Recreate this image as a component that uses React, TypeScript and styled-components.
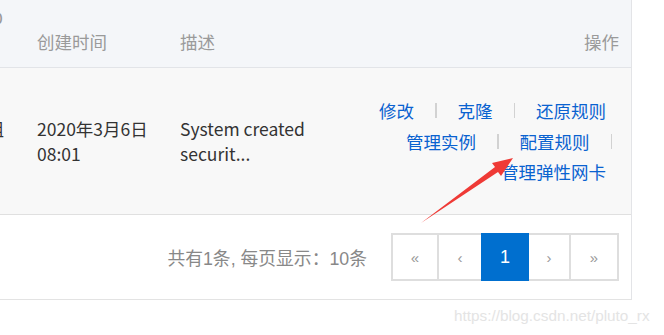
import * as React from "react";
import styled, { createGlobalStyle } from "styled-components";

const GlobalStyle = createGlobalStyle`
    html, body {
        margin: 0;
        padding: 0;
        background: #fff;
        overflow: hidden;
    }
    body {
        font-family: "Noto Sans CJK SC", "Noto Sans", sans-serif;
        font-size: 17.5px;
    }
`;

const Page = styled.div`
    position: relative;
    width: 664px;
    height: 335px;
    overflow: hidden;
`;

const Table = styled.div`
    width: 731px;
    margin-left: -100px;
    border-right: 1px solid #e3e4e7;
    border-bottom: 1px solid #e3e3e3;
`;

const COLUMNS = "120px 143px 150px 1fr";

const HeaderRow = styled.div`
    display: grid;
    grid-template-columns: ${COLUMNS};
    height: 67px;
    background: #f4f6f9;
    border-bottom: 1px solid #e2e4e8;
    color: #9a9a9a;
`;

const HeadCell = styled.div<{ $align?: string }>`
    display: flex;
    align-items: flex-end;
    justify-content: ${p => p.$align || "flex-start"};
    padding: 0 12px 13px 17px;
    line-height: 24px;
`;

// first column, mostly scrolled out of view on the left
const Clipped = styled.div<{ $top?: boolean }>`
    display: flex;
    justify-content: flex-end;
    align-items: ${p => (p.$top ? "flex-start" : "center")};
    padding: ${p => (p.$top ? "5px 17px 0 0" : "0 16px 25px 0")};
    white-space: nowrap;
    overflow: hidden;
`;

const BodyRow = styled.div`
    display: grid;
    grid-template-columns: ${COLUMNS};
    height: 146px;
    background: #f8f8f8;
    border-bottom: 1px solid #e0e0e0;
    color: #333;
`;

const Cell = styled.div`
    display: flex;
    flex-direction: column;
    justify-content: center;
    padding-left: 17px;
    line-height: 25px;
    white-space: nowrap;
`;

const Actions = styled.div`
    display: flex;
    flex-direction: column;
    justify-content: center;
    align-items: flex-end;
    padding-right: 19px;
`;

const ActionLine = styled.div<{ $inset?: number }>`
    display: flex;
    align-items: center;
    height: 30.5px;
    padding-right: ${p => p.$inset || 0}px;
`;

const ActionLink = styled.a`
    color: #0a62d0;
    text-decoration: none;
    cursor: pointer;
    white-space: nowrap;
`;

const Sep = styled.span<{ $last?: boolean }>`
    display: inline-block;
    width: 1.5px;
    height: 15px;
    margin: 0 ${p => (p.$last ? "0 0 21px" : "21px")};
    background: #d2d2d2;
`;

const Footer = styled.div`
    display: flex;
    justify-content: flex-end;
    align-items: center;
    gap: 24px;
    height: 84px;
    padding-right: 12px;
    background: #fff;
`;

const Summary = styled.span`
    color: #888;
    font-family: "Liberation Sans", "Noto Sans CJK SC", sans-serif;
    font-size: 17.8px;
`;

const Pager = styled.div`
    display: flex;
    height: 48px;
`;

const PageButton = styled.button<{ $w: number; $active?: boolean }>`
    width: ${p => p.$w}px;
    height: 48px;
    margin-left: -2px;
    border: 2px solid ${p => (p.$active ? "#006fcf" : "#dedede")};
    background: ${p => (p.$active ? "#006fcf" : "#fff")};
    color: ${p => (p.$active ? "#fff" : "#999")};
    font-family: "Liberation Sans", sans-serif;
    font-size: ${p => (p.$active ? "18px" : "15px")};
    padding: 0;
    position: relative;
    z-index: ${p => (p.$active ? 1 : 0)};
    cursor: pointer;
    &:first-child {
        margin-left: 0;
    }
`;

const Watermark = styled.div`
    position: absolute;
    left: 454px;
    top: 307px;
    color: #e4e4e4;
    font-family: "Liberation Sans", sans-serif;
    font-size: 15.3px;
    white-space: nowrap;
`;

const ArrowSvg = styled.svg`
    position: absolute;
    left: 0;
    top: 0;
    pointer-events: none;
`;

const pages = [
    { label: "«", w: 48 },
    { label: "‹", w: 46 },
    { label: "1", w: 48, active: true },
    { label: "›", w: 44 },
    { label: "»", w: 50 },
];

export default function App() {
    return (
        <Page>
            <GlobalStyle />
            <Table>
                <HeaderRow>
                    <Clipped $top>安全组ID</Clipped>
                    <HeadCell>创建时间</HeadCell>
                    <HeadCell>描述</HeadCell>
                    <HeadCell $align="flex-end">操作</HeadCell>
                </HeaderRow>
                <BodyRow>
                    <Clipped>默认安全组</Clipped>
                    <Cell>
                        <span>2020年3月6日</span>
                        <span>08:01</span>
                    </Cell>
                    <Cell>
                        <span>System created</span>
                        <span>securit...</span>
                    </Cell>
                    <Actions>
                        <ActionLine $inset={6}>
                            <ActionLink>修改</ActionLink>
                            <Sep />
                            <ActionLink>克隆</ActionLink>
                            <Sep />
                            <ActionLink>还原规则</ActionLink>
                        </ActionLine>
                        <ActionLine>
                            <ActionLink>管理实例</ActionLink>
                            <Sep />
                            <ActionLink>配置规则</ActionLink>
                            <Sep $last />
                        </ActionLine>
                        <ActionLine $inset={6}>
                            <ActionLink>管理弹性网卡</ActionLink>
                        </ActionLine>
                    </Actions>
                </BodyRow>
                <Footer>
                    <Summary>共有1条, 每页显示：10条</Summary>
                    <Pager>
                        {pages.map(p => (
                            <PageButton key={p.label} $w={p.w} $active={p.active}>
                                {p.label}
                            </PageButton>
                        ))}
                    </Pager>
                </Footer>
            </Table>
            <Watermark>https://blog.csdn.net/pluto_rx</Watermark>
            <ArrowSvg width="664" height="335" viewBox="0 0 664 335">
                <polygon
                    points="421,223 495,167 492,163 513,158 501,176 498,172"
                    fill="#ef3a36"
                />
            </ArrowSvg>
        </Page>
    );
}
